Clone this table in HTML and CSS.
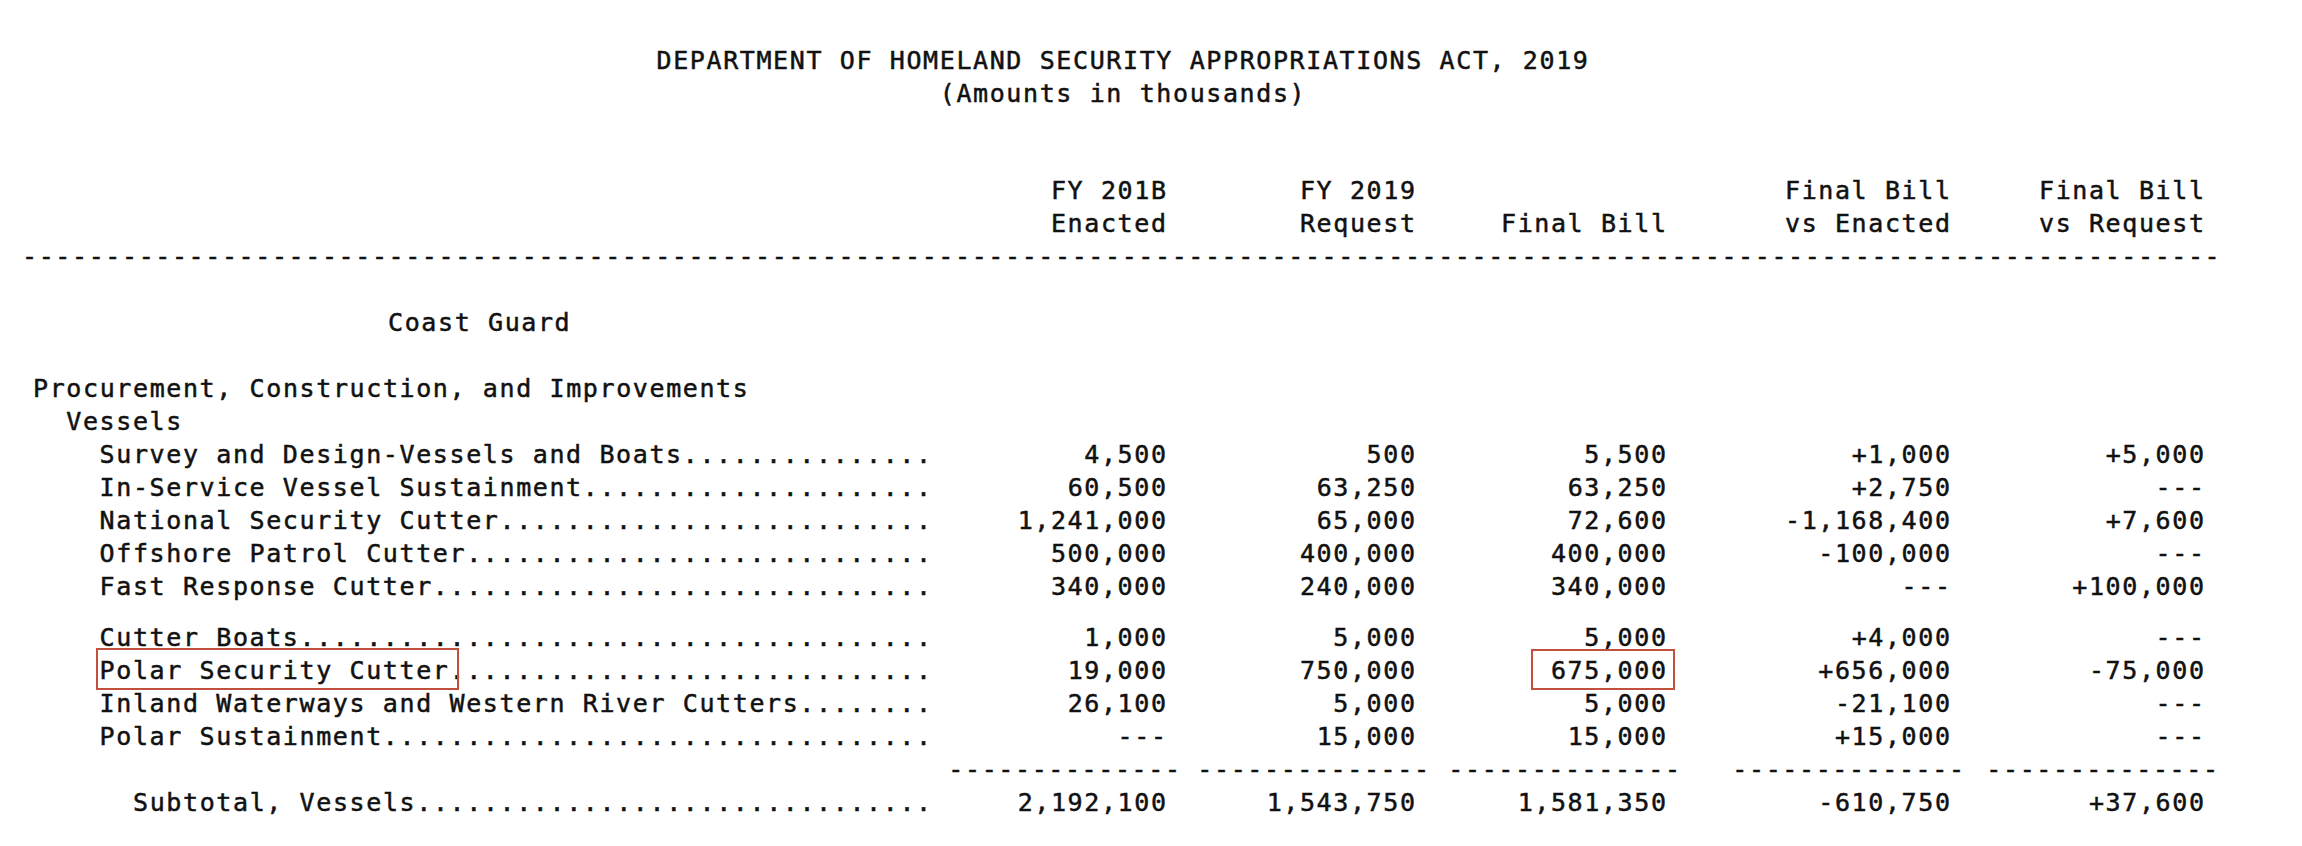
FILE: index.html
```html
<!DOCTYPE html>
<html lang="en">
<head>
<meta charset="utf-8">
<title>Department of Homeland Security Appropriations Act, 2019</title>
<link rel="stylesheet" href="styles.css">
</head>
<body>
<main class="page">
  <header class="titles">
    <div class="line">DEPARTMENT OF HOMELAND SECURITY APPROPRIATIONS ACT, 2019</div>
    <div class="line">(Amounts in thousands)</div>
  </header>
  <div class="blank"></div>
  <div class="blank"></div>

  <div class="row head">
    <div class="lab"></div>
    <div class="num">FY 201B<br>Enacted</div>
    <div class="num">FY 2019<br>Request</div>
    <div class="num"><br>Final Bill</div>
    <div class="num">Final Bill<br>vs Enacted</div>
    <div class="num">Final Bill<br>vs Request</div>
  </div>
  <div class="rule-full">------------------------------------------------------------------------------------------------------------------------------------</div>
  <div class="blank"></div>
  <div class="section">Coast Guard</div>
  <div class="blank"></div>

  <div class="row"><div class="lab i0">Procurement, Construction, and Improvements</div></div>
  <div class="row"><div class="lab i2">Vessels</div></div>

  <div class="row">
    <div class="lab i4">Survey and Design-Vessels and Boats...............</div>
    <div class="num">4,500</div><div class="num">500</div><div class="num">5,500</div><div class="num">+1,000</div><div class="num">+5,000</div>
  </div>
  <div class="row">
    <div class="lab i4">In-Service Vessel Sustainment.....................</div>
    <div class="num">60,500</div><div class="num">63,250</div><div class="num">63,250</div><div class="num">+2,750</div><div class="num">---</div>
  </div>
  <div class="row">
    <div class="lab i4">National Security Cutter..........................</div>
    <div class="num">1,241,000</div><div class="num">65,000</div><div class="num">72,600</div><div class="num">-1,168,400</div><div class="num">+7,600</div>
  </div>
  <div class="row">
    <div class="lab i4">Offshore Patrol Cutter............................</div>
    <div class="num">500,000</div><div class="num">400,000</div><div class="num">400,000</div><div class="num">-100,000</div><div class="num">---</div>
  </div>
  <div class="row">
    <div class="lab i4">Fast Response Cutter..............................</div>
    <div class="num">340,000</div><div class="num">240,000</div><div class="num">340,000</div><div class="num">---</div><div class="num">+100,000</div>
  </div>

  <div class="row gap">
    <div class="lab i4">Cutter Boats......................................</div>
    <div class="num">1,000</div><div class="num">5,000</div><div class="num">5,000</div><div class="num">+4,000</div><div class="num">---</div>
  </div>
  <div class="row">
    <div class="lab i4"><span class="mark mark-label">Polar Security Cutter</span>.............................</div>
    <div class="num">19,000</div><div class="num">750,000</div><div class="num"><span class="mark mark-num">675,000</span></div><div class="num">+656,000</div><div class="num">-75,000</div>
  </div>
  <div class="row">
    <div class="lab i4">Inland Waterways and Western River Cutters........</div>
    <div class="num">26,100</div><div class="num">5,000</div><div class="num">5,000</div><div class="num">-21,100</div><div class="num">---</div>
  </div>
  <div class="row">
    <div class="lab i4">Polar Sustainment.................................</div>
    <div class="num">---</div><div class="num">15,000</div><div class="num">15,000</div><div class="num">+15,000</div><div class="num">---</div>
  </div>

  <div class="row rules">
    <div class="lab"></div>
    <div class="num"><span>--------------</span></div>
    <div class="num"><span>--------------</span></div>
    <div class="num"><span>--------------</span></div>
    <div class="num"><span>--------------</span></div>
    <div class="num"><span>--------------</span></div>
  </div>
  <div class="row">
    <div class="lab i6">Subtotal, Vessels...............................</div>
    <div class="num">2,192,100</div><div class="num">1,543,750</div><div class="num">1,581,350</div><div class="num">-610,750</div><div class="num">+37,600</div>
  </div>
</main>
</body>
</html>
```

FILE: styles.css
```css
* {
  box-sizing: border-box;
}

html, body {
  margin: 0;
  background: #ffffff;
}

.page {
  display: block;
  padding: 42px 0 0 33px;
  font-family: "DejaVu Sans Mono", "Liberation Mono", monospace;
  font-size: 25px;
  letter-spacing: 1.61px;
  line-height: 33px;
  color: #111111;
  -webkit-text-stroke: 0.5px #111111;
  white-space: nowrap;
}

.titles {
  display: block;
  width: 2180px;
  padding-top: 2px;
  margin-bottom: -2px;
  text-align: center;
}

.blank {
  height: 33px;
}

.row {
  display: grid;
  grid-template-columns: 900px 234.6px 249px 251px 284px 254px;
}

.num {
  text-align: right;
}

.lab.i0 { padding-left: 0; }
.lab.i2 { padding-left: 33.3px; }
.lab.i4 { padding-left: 66.6px; }
.lab.i6 { padding-left: 100px; }

.gap {
  margin-top: 18px;
}

.rule-full {
  margin-left: -11px;
}

.section {
  padding-left: 355px;
}

.rules .num span {
  margin-right: -14px;
}

.mark {
  position: relative;
}

.mark::after {
  content: "";
  position: absolute;
  border: 2px solid #c1503d;
}

.mark-label::after {
  left: -4px;
  right: -10px;
  top: -8px;
  bottom: -5px;
}

.mark-num::after {
  left: -20px;
  right: -7px;
  top: -7px;
  bottom: -5px;
}
```
